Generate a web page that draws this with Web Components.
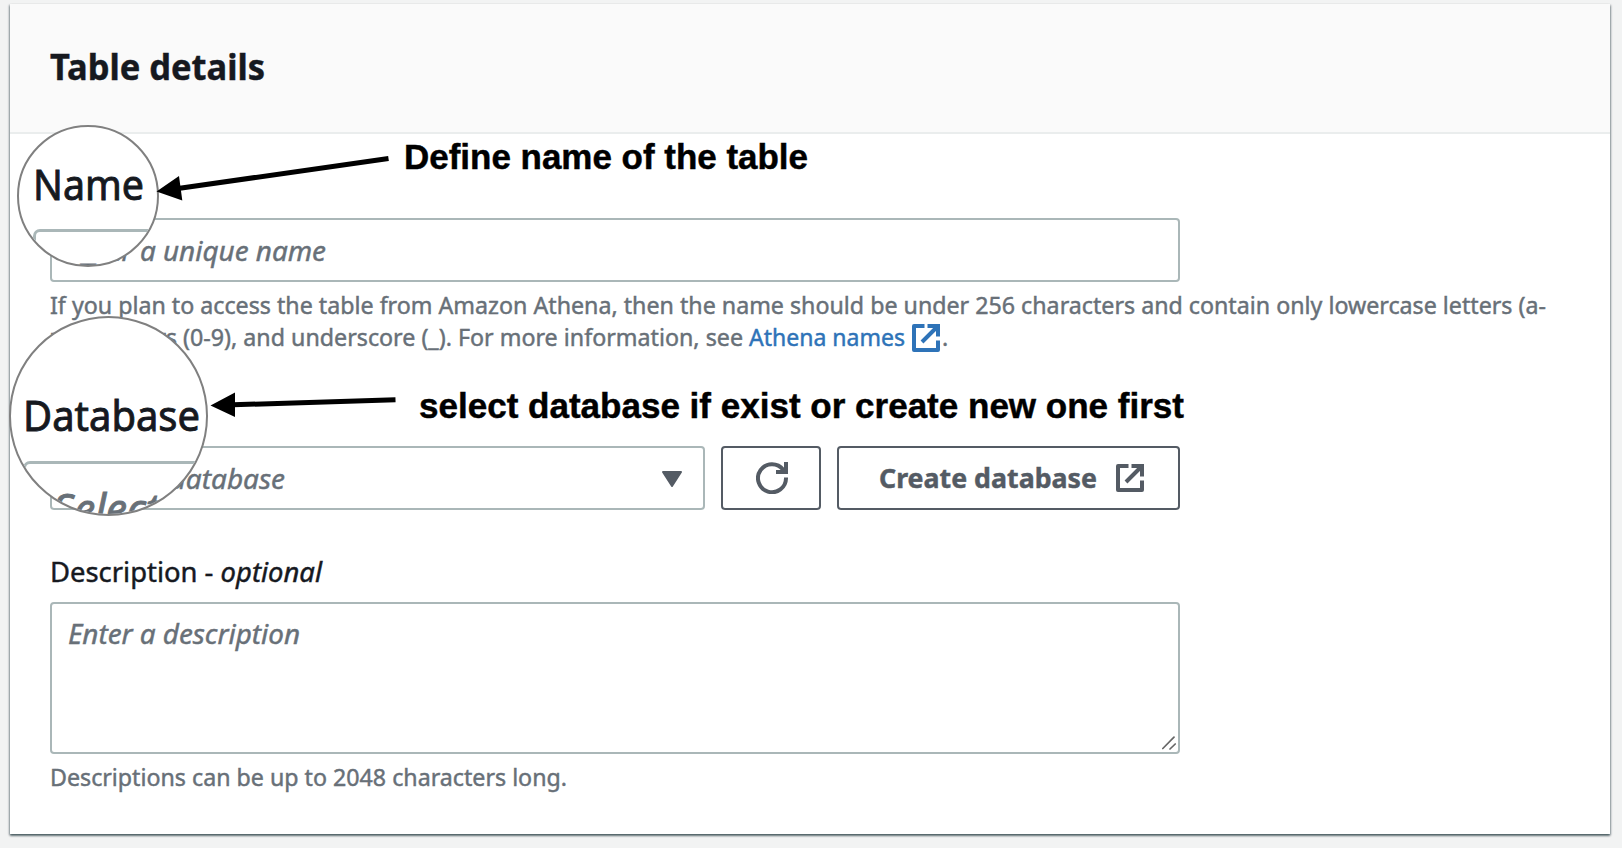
<!DOCTYPE html>
<html lang="en">
<head>
<meta charset="utf-8">
<title>Table details</title>
<style>
html,body{margin:0;height:100%}
body{background:#f2f3f3;font-family:"Noto Sans","Open Sans",sans-serif;color:#16191f;overflow:hidden;-webkit-text-stroke:.45px}
</style>
</head>
<body>
<table-details-page></table-details-page>
<script>
const define = (name, html, init) => customElements.define(name, class extends HTMLElement {
  connectedCallback() {
    if (this.shadowRoot) return;
    const t = document.createElement('template');
    t.innerHTML = html.trim();
    this.attachShadow({ mode: 'open' }).appendChild(t.content.cloneNode(true));
    if (init) init(this, this.shadowRoot);
  }
});

/* One line of text condensed or widened to the width in its "w" attribute. */
define('fit-text', `
<style>
:host{display:inline-block;white-space:pre;vertical-align:baseline}
span{display:inline-block;transform-origin:0 50%;white-space:pre}
</style><span><slot></slot></span>`, (host, root) => {
  const w = +host.getAttribute('w');
  const span = root.querySelector('span');
  host.style.width = w + 'px';
  const fit = () => {
    span.style.transform = 'none';
    const n = span.getBoundingClientRect().width;
    if (n) span.style.transform = 'scaleX(' + w / n + ')';
  };
  fit();
  queueMicrotask(fit);
  document.addEventListener('DOMContentLoaded', fit);
  if (document.fonts) document.fonts.ready.then(fit);
});

define('external-icon', `
<style>:host{display:inline-block;width:28px;height:28px}svg{display:block}</style>
<svg width="28" height="28" viewBox="0 0 28 28" fill="none" stroke="currentColor" stroke-width="4">
<path d="M12.5 2H2V26H26V16.5" stroke-linejoin="round"/>
<path d="M15.5 2H26V12.5M26 2L10 18"/></svg>`);

define('refresh-icon', `
<style>:host{display:block;width:32px;height:32px}svg{display:block}</style>
<svg width="32" height="32" viewBox="0 0 32 32" fill="none" stroke="currentColor" stroke-width="4">
<path d="M30 15.5V16A14 14 0 1 1 27.2 7.8L29 10"/><path d="M30 0V10H20"/></svg>`);

define('text-field', `
<style>
:host{display:flex;box-sizing:border-box;height:64px;border:2px solid #aab7b8;border-radius:4px;background:#fff;padding:1px 19px 0 16px;justify-content:space-between;align-items:center;font:italic 27.3px/60px "Noto Sans",sans-serif;color:#687078}
:host([multiline]){height:152px;align-items:flex-start;padding:10px 2px 2px 16px;line-height:40px}
</style><slot></slot><slot name="end"></slot>`);

define('aws-button', `
<style>
:host{display:flex;box-sizing:border-box;height:64px;border:2px solid #545b64;border-radius:4px;background:#fff;color:#545b64;justify-content:center;align-items:center;gap:19px;font:bold 27px/60px "Noto Sans",sans-serif}
</style><slot></slot>`);

define('field-hint', `
<style>:host{display:block;margin-top:7px;font-size:23.4px;line-height:32px;color:#687078;white-space:nowrap}</style><slot></slot>`);

define('form-panel', `
<style>
:host{display:flex;flex-direction:column;box-sizing:border-box;height:830px;background:#fff;box-shadow:0 2px 2px 0 rgba(0,28,36,.45),1px 1px 2px 0 rgba(0,28,36,.3),-1px 1px 2px 0 rgba(0,28,36,.3)}
header{box-sizing:border-box;height:130px;background:#fafafa;border-bottom:2px solid #eaeded;padding:37px 40px 0;font-weight:bold;font-size:35.5px;line-height:50px}
main{padding:84px 40px 0}
</style><header><slot name="title"></slot></header><main><slot></slot></main>`);

/* Round magnifier laid over the form. */
define('magnifier-lens', `
<style>
:host{position:absolute;box-sizing:border-box;border:2px solid #808080;border-radius:50%;background:#fff;overflow:hidden;font-size:41.5px;line-height:56px;color:#16191f;-webkit-text-stroke:.9px}
.box{position:absolute;left:var(--bx);top:var(--by);height:120px;width:300px;box-sizing:border-box;border:3px solid #aab7b8;border-radius:7px;color:#687078;font-style:italic}
.label{position:absolute;left:var(--lx);top:var(--ly)}
.value{position:absolute;left:var(--vx);top:var(--vy)}
</style><div class="box"><div class="value"><slot name="value"></slot></div></div><div class="label"><slot></slot></div>`);

define('table-details-page', `
<style>
:host{display:block;position:relative;box-sizing:border-box;width:1622px;height:848px;padding:4px 12px 14px 10px}
.narrow{width:1130px}
.row{display:grid;grid-template-columns:655px 100px 343px;gap:16px;margin-top:93px}
.label{margin:42px 0 10px;font-size:27.3px;line-height:40px;height:40px}
a{color:#2e73b8;text-decoration:none}
.l2{display:flex}
.l2 external-icon{margin:3px 2px 0 7px}
.note{position:absolute;font:bold 34.4px/40px "Liberation Sans",Arial,sans-serif;color:#000}
.n1{left:404px;top:136.5px}
.n2{left:419px;top:385.5px}
.arrows{position:absolute;left:0;top:0;pointer-events:none}
</style>
<form-panel>
  <fit-text slot="title" w="215">Table details</fit-text>
  <text-field class="narrow"><fit-text w="258">Enter a unique name</fit-text></text-field>
  <field-hint><fit-text w="1496">If you plan to access the table from Amazon Athena, then the name should be under 256 characters and contain only lowercase letters (a-</fit-text>
    <div class="l2"><fit-text w="133">z), numbers </fit-text><fit-text w="560">(0-9), and underscore (_). For more information, see</fit-text><a style="margin-left:6px"><fit-text w="156">Athena names</fit-text></a><external-icon style="color:#2e73b8"></external-icon><span>.</span></div>
  </field-hint>
  <div class="row">
    <text-field><fit-text w="217">Select a database</fit-text>
      <svg slot="end" width="26" height="20" viewBox="0 0 26 20" style="margin-right:-1px"><path d="M4 3H22L13 17Z" fill="#545b64" stroke="#545b64" stroke-width="2" stroke-linejoin="round"/></svg></text-field>
    <aws-button><refresh-icon style="margin-left:2px"></refresh-icon></aws-button>
    <aws-button style="padding-left:5px"><fit-text w="218">Create database</fit-text><external-icon></external-icon></aws-button>
  </div>
  <div class="label narrow"><fit-text w="272">Description - <i>optional</i></fit-text></div>
  <text-field multiline class="narrow"><fit-text w="232">Enter a description</fit-text>
    <svg slot="end" width="14" height="14" viewBox="0 0 14 14" style="align-self:flex-end;display:block"><path d="M.8 12.5L12 1.2M8 13L13.2 8" stroke="#666" stroke-width="1.7" stroke-linecap="round"/></svg></text-field>
  <field-hint><fit-text w="517">Descriptions can be up to 2048 characters long.</fit-text></field-hint>
</form-panel>
<magnifier-lens style="left:16.5px;top:124.5px;width:142.5px;height:142.5px;--lx:14px;--ly:29px;--bx:14px;--by:102.5px;--vx:36px;--vy:18px"><fit-text w="111">Name</fit-text><fit-text slot="value" w="100">Enter</fit-text></magnifier-lens>
<magnifier-lens style="left:8.5px;top:315.5px;width:199.500px;height:200px;--lx:12px;--ly:69.5px;--bx:12px;--by:143.5px;--vx:27px;--vy:16px"><fit-text w="177">Database</fit-text><fit-text slot="value" w="107">Select</fit-text></magnifier-lens>
<svg class="arrows" width="420" height="430" viewBox="0 0 420 430">
  <path d="M388.5 158.5L178 188.5M395.5 399.7L233 404.8" stroke="#000" stroke-width="5"/>
  <path d="M156.5 191.5L179 176L182.3 200.5ZM210.5 405.5L235 392.5V417Z"/>
</svg>
<div class="note n1"><fit-text w="404">Define name of the table</fit-text></div>
<div class="note n2"><fit-text w="765">select database if exist or create new one first</fit-text></div>
`);
</script>
</body>
</html>
